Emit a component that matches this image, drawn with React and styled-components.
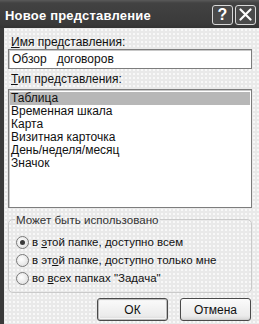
import styled, { createGlobalStyle } from "styled-components"

const GlobalStyle = createGlobalStyle`
  html, body {
    margin: 0;
    padding: 0;
    background: #e9e9e9;
  }
  body {
    font-family: "Liberation Sans", Arial, sans-serif;
    color: #111;
  }
`

const items = ["Таблица", "Временная шкала", "Карта", "Визитная карточка", "День/неделя/месяц", "Значок"]

export default function App() {
  return (
    <>
      <GlobalStyle />
      <Window>
        <TitleBar>
          <Title>Новое представление</Title>
          <Controls>
            <CtrlButton>?</CtrlButton>
            <CtrlButton>
              <svg width="13" height="13" viewBox="0 0 13 13">
                <path d="M1.5 1.5 L11.5 11.5 M11.5 1.5 L1.5 11.5" stroke="#fff" strokeWidth="2.2" strokeLinecap="round" />
              </svg>
            </CtrlButton>
          </Controls>
        </TitleBar>
        <Frame>
          <Body>
            <Label><Key>И</Key>мя представления:</Label>
            <TextInput>Обзор&nbsp;&nbsp;&nbsp;договоров</TextInput>
            <Label $top={4}><Key>Т</Key>ип представления:</Label>
            <ListBox>
              {items.map((i, n) => (
                <Item key={i} $selected={n === 0}>{i}</Item>
              ))}
            </ListBox>
            <Group>
              <Legend>Может быть использовано</Legend>
              <RadioRow>
                <Radio $checked />
                <span>в <Key>э</Key>той папке, доступно всем</span>
              </RadioRow>
              <RadioRow>
                <Radio />
                <span>в эт<Key>о</Key>й папке, доступно только мне</span>
              </RadioRow>
              <RadioRow>
                <Radio />
                <span>во <Key>в</Key>сех папках "Задача"</span>
              </RadioRow>
            </Group>
            <Buttons>
              <Button $default>ОК</Button>
              <Button>Отмена</Button>
            </Buttons>
          </Body>
        </Frame>
      </Window>
    </>
  )
}

const Window = styled.div`
  width: 259px;
  height: 324px;
  display: flex;
  flex-direction: column;
  overflow: hidden;
  background: #e9e9e9;
`

const TitleBar = styled.div`
  height: 28px;
  flex: none;
  display: flex;
  align-items: center;
  justify-content: space-between;
  padding: 0 3px 0 5px;
  background: linear-gradient(#5a5a5a 0px, #424242 3px, #3a3a3a 24px, #333 28px);
`

const Title = styled.div`
  color: #fff;
  font-size: 13px;
  font-weight: 700;
  letter-spacing: 0.2px;
  margin-top: 2px;
`

const Controls = styled.div`
  display: flex;
  gap: 2px;
  margin-top: 1px;
`

const CtrlButton = styled.div`
  width: 19px;
  height: 18px;
  border: 1px solid #d8d8d8;
  border-radius: 3px;
  background: #4a4a4a;
  color: #fff;
  font-size: 16px;
  font-weight: 700;
  display: flex;
  align-items: center;
  justify-content: center;
`

const Frame = styled.div`
  flex: 1;
  display: flex;
  border-left: 4px solid #3a3a3a;
  background-color: #e9e9e9;
  background-image: radial-gradient(circle, #f8f8f8 0.8px, transparent 1px);
  background-size: 4px 4px;
`

const Body = styled.div`
  flex: 1;
  display: flex;
  flex-direction: column;
  padding: 8px 7px 0 4px;
  font-size: 12px;
`

const Label = styled.div`
  height: 13px;
  line-height: 13px;
  padding-left: 3px;
  margin-top: ${p => p.$top || 0}px;
`

const Key = styled.span`
  text-decoration: underline;
`

const TextInput = styled.div`
  height: 20px;
  box-sizing: border-box;
  border: 1px solid #7d7d7d;
  box-shadow: inset 1px 1px 0 #c8c8c8;
  background: #fff;
  line-height: 18px;
  padding-left: 3px;
  white-space: pre;
`

const ListBox = styled.div`
  margin-top: 3px;
  height: 119px;
  box-sizing: border-box;
  border: 1px solid #7d7d7d;
  box-shadow: inset 1px 1px 0 #c8c8c8;
  background: #fff;
  padding: 2px 1px;
`

const Item = styled.div`
  height: 13px;
  line-height: 13px;
  padding-left: 1px;
  background: ${p => (p.$selected ? "#b7b7b7" : "transparent")};
`

const Group = styled.fieldset`
  margin: 5px 0 0;
  padding: 7px 0 5px 7px;
  border: 1px solid #cacaca;
  border-radius: 5px;
  min-width: 0;
`

const Legend = styled.legend`
  padding: 0 1px;
  margin-left: -1px;
  color: #333;
  font-size: 11.6px;
  line-height: 13px;
`

const RadioRow = styled.div`
  height: 18px;
  display: flex;
  align-items: center;
  gap: 3px;
  font-size: 11.5px;
`

const Radio = styled.span`
  width: 11px;
  height: 11px;
  border-radius: 50%;
  border: 1px solid #7a7a7a;
  background: radial-gradient(circle at 40% 40%, #fff 0%, #e4e4e4 70%, #cfcfcf 100%);
  display: flex;
  align-items: center;
  justify-content: center;
  flex: none;
  &::after {
    content: "";
    width: 5px;
    height: 5px;
    border-radius: 50%;
    background: ${p => (p.$checked ? "#3a3a3a" : "transparent")};
  }
`

const Buttons = styled.div`
  display: flex;
  justify-content: flex-end;
  gap: 12px;
  margin-top: 5px;
  padding-right: 1px;
`

const Button = styled.div`
  width: 71px;
  height: 23px;
  box-sizing: border-box;
  border: 1px solid #4a4a4a;
  border-radius: 3px;
  background: linear-gradient(#fbfbfb, #ebebeb 80%, #d6d6d6);
  box-shadow: ${p => (p.$default ? "inset 0 0 0 1px #bcbcbc, inset 0 0 0 2px #f4f4f4" : "inset 0 -1px 0 #cfcfcf")};
  display: flex;
  align-items: center;
  justify-content: center;
  font-size: 12px;
`
